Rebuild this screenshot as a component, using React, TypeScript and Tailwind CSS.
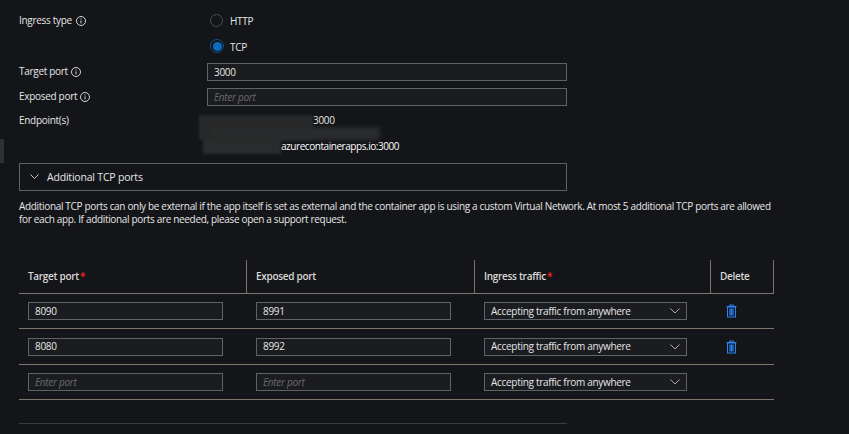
const font = "font-['Open_Sans','Noto_Sans',sans-serif]";
const body = "text-[10px] tracking-[-0.3px]";

function InfoIcon() {
  return (
    <svg width="12" height="12" viewBox="0 0 12 12" fill="none" className="shrink-0">
      <circle cx="6" cy="6" r="4.5" stroke="#d6d6d6" strokeWidth="1" />
      <path d="M6 5.4v3M6 3.4v1" stroke="#d6d6d6" strokeWidth="1" />
    </svg>
  );
}

function FieldInput({ value, className }: { value?: string; className: string }) {
  return (
    <div className={`flex items-center border border-[#5f6266] bg-[#1b1c1f] px-[6px] ${body} ${className}`}>
      {value ? <span className="text-[#e6e6e6]">{value}</span> : <span className="italic text-[#6a6a6a]">Enter port</span>}
    </div>
  );
}

function TrashIcon() {
  return (
    <svg width="11" height="14" viewBox="0 0 11 14" fill="none">
      <path d="M0.5 2.5h10M3.5 2.5V1h4v1.5" stroke="#2a85f0" strokeWidth="1" />
      <rect x="1.5" y="3" width="8" height="10" stroke="#2a85f0" strokeWidth="1" />
      <rect x="3" y="4.5" width="5" height="7" fill="#1b5da8" />
      <rect x="5" y="4.5" width="1" height="7" fill="#2a85f0" />
    </svg>
  );
}

function TableRow({ target, exposed, del, height }: { target?: string; exposed?: string; del?: boolean; height: string }) {
  return (
    <div className={`flex items-center border-b border-[#7d746b] ${height}`}>
      <div className="w-[228px] pl-[9px]">
        <FieldInput value={target} className="h-[18px] w-[195px]" />
      </div>
      <div className="w-[228px] pl-[9px]">
        <FieldInput value={exposed} className="h-[18px] w-[195px]" />
      </div>
      <div className="w-[236px] pl-[9px]">
        <div className={`flex h-[18px] w-[203px] items-center justify-between border border-[#5f6266] bg-[#1b1c1f] pl-[6px] pr-[6px] text-[#e6e6e6] ${body}`}>
          <span>Accepting traffic from anywhere</span>
          <svg width="10" height="6" viewBox="0 0 10 6" fill="none">
            <path d="M0.5 0.5 5 5l4.5-4.5" stroke="#b5aca3" strokeWidth="1" />
          </svg>
        </div>
      </div>
      <div className="flex w-[63px] justify-center pr-[23px]">{del && <TrashIcon />}</div>
    </div>
  );
}

function HeaderCell({ className, children }: { className: string; children: React.ReactNode }) {
  return (
    <div className={`flex h-[33px] items-center border-r border-[#7d746b] pl-[9px] font-semibold text-[#d8d8d8] ${body} ${className}`}>
      {children}
    </div>
  );
}

const Req = () => <span className="ml-[1px] text-[#ff2020]">*</span>;

export default function App() {
  return (
    <div className={`relative h-[434px] w-[849px] overflow-hidden bg-[#141518] text-[#e6e6e6] ${font}`}>
      <div className="absolute left-0 top-[139px] h-[24px] w-[4px] bg-[#2e3033]" />

      <div className="flex flex-col pl-[19px] pt-[8px]">
        <div className="flex h-[25px] items-center">
          <div className={`flex w-[191px] items-center gap-[3px] ${body}`}>Ingress type <InfoIcon /></div>
          <span className="h-[13px] w-[13px] rounded-full border border-[#4b4d50]" />
          <span className={`ml-[7px] pt-[2px] ${body}`}>HTTP</span>
        </div>
        <div className="flex h-[26px] items-center">
          <div className="w-[191px]" />
          <span className="flex h-[14px] w-[14px] items-center justify-center rounded-full border-[1.5px] border-[#12508f]">
            <span className="h-[9px] w-[9px] rounded-full bg-[#0f6cbd]" />
          </span>
          <span className={`ml-[6px] pt-[3px] ${body}`}>TCP</span>
        </div>
        <div className="mt-[4px] flex h-[17px] items-center">
          <div className={`flex w-[188px] items-center gap-[2px] ${body}`}>Target port <InfoIcon /></div>
          <FieldInput value="3000" className="h-[18px] w-[360px] pt-[1px]" />
        </div>
        <div className="mt-[8px] flex h-[17px] items-center">
          <div className={`flex w-[188px] items-center gap-[2px] ${body}`}>Exposed port <InfoIcon /></div>
          <FieldInput className="h-[18px] w-[360px] pt-[1px]" />
        </div>
        <div className={`relative mt-[7px] flex h-[51px] ${body}`}>
          <div className="w-[188px] pt-[1px]">Endpoint(s)</div>
          <div className="pt-[1px]">
            <div className="pl-[106px]">3000</div>
            <div className="mt-[11px] pl-[74px] tracking-[-0.45px] text-white">azurecontainerapps.io:3000</div>
          </div>
          {/* redacted endpoint hostnames */}
          <div className="absolute left-[180px] top-[3px] h-[25px] w-[114px] bg-[#272829] blur-[1px]" />
          <div className="absolute left-[191px] top-[15px] h-[13px] w-[170px] bg-[#2a2b2c] blur-[2px]" />
          <div className="absolute left-[184px] top-[27px] h-[15px] w-[78px] bg-[#2a2b2c] blur-[1px]" />
        </div>
        <div className="flex h-[28px] w-[548px] items-center border border-[#5f6266] pl-[10px] text-[10.5px] tracking-[-0.2px]">
          <svg width="9" height="6" viewBox="0 0 9 6" fill="none">
            <path d="M0.5 0.5 4.5 4.5l4-4" stroke="#c9c9c9" strokeWidth="1" />
          </svg>
          <span className="ml-[8px] pt-[1px]">Additional TCP ports</span>
        </div>
        <p className="mt-[9px] w-[755px] text-[10px] leading-[13px] tracking-[-0.33px]">
          Additional TCP ports can only be external if the app itself is set as external and the container app is using a custom Virtual Network. At most 5 additional TCP ports are allowed for each app. If additional ports are needed, please open a support request.
        </p>

        <div className="mt-[34px] w-[755px]">
          <div className="flex border-b border-[#7d746b]">
            <HeaderCell className="w-[228px]">Target port<Req /></HeaderCell>
            <HeaderCell className="w-[228px]">Exposed port</HeaderCell>
            <HeaderCell className="w-[236px]">Ingress traffic<Req /></HeaderCell>
            <HeaderCell className="w-[63px]">Delete</HeaderCell>
          </div>
          <TableRow target="8090" exposed="8991" del height="h-[35px]" />
          <TableRow target="8080" exposed="8992" del height="h-[36px]" />
          <TableRow height="h-[35px]" />
        </div>
        <div className="mt-[23px] w-[548px] border-b border-[#3a3b3d]" />
      </div>
    </div>
  );
}
